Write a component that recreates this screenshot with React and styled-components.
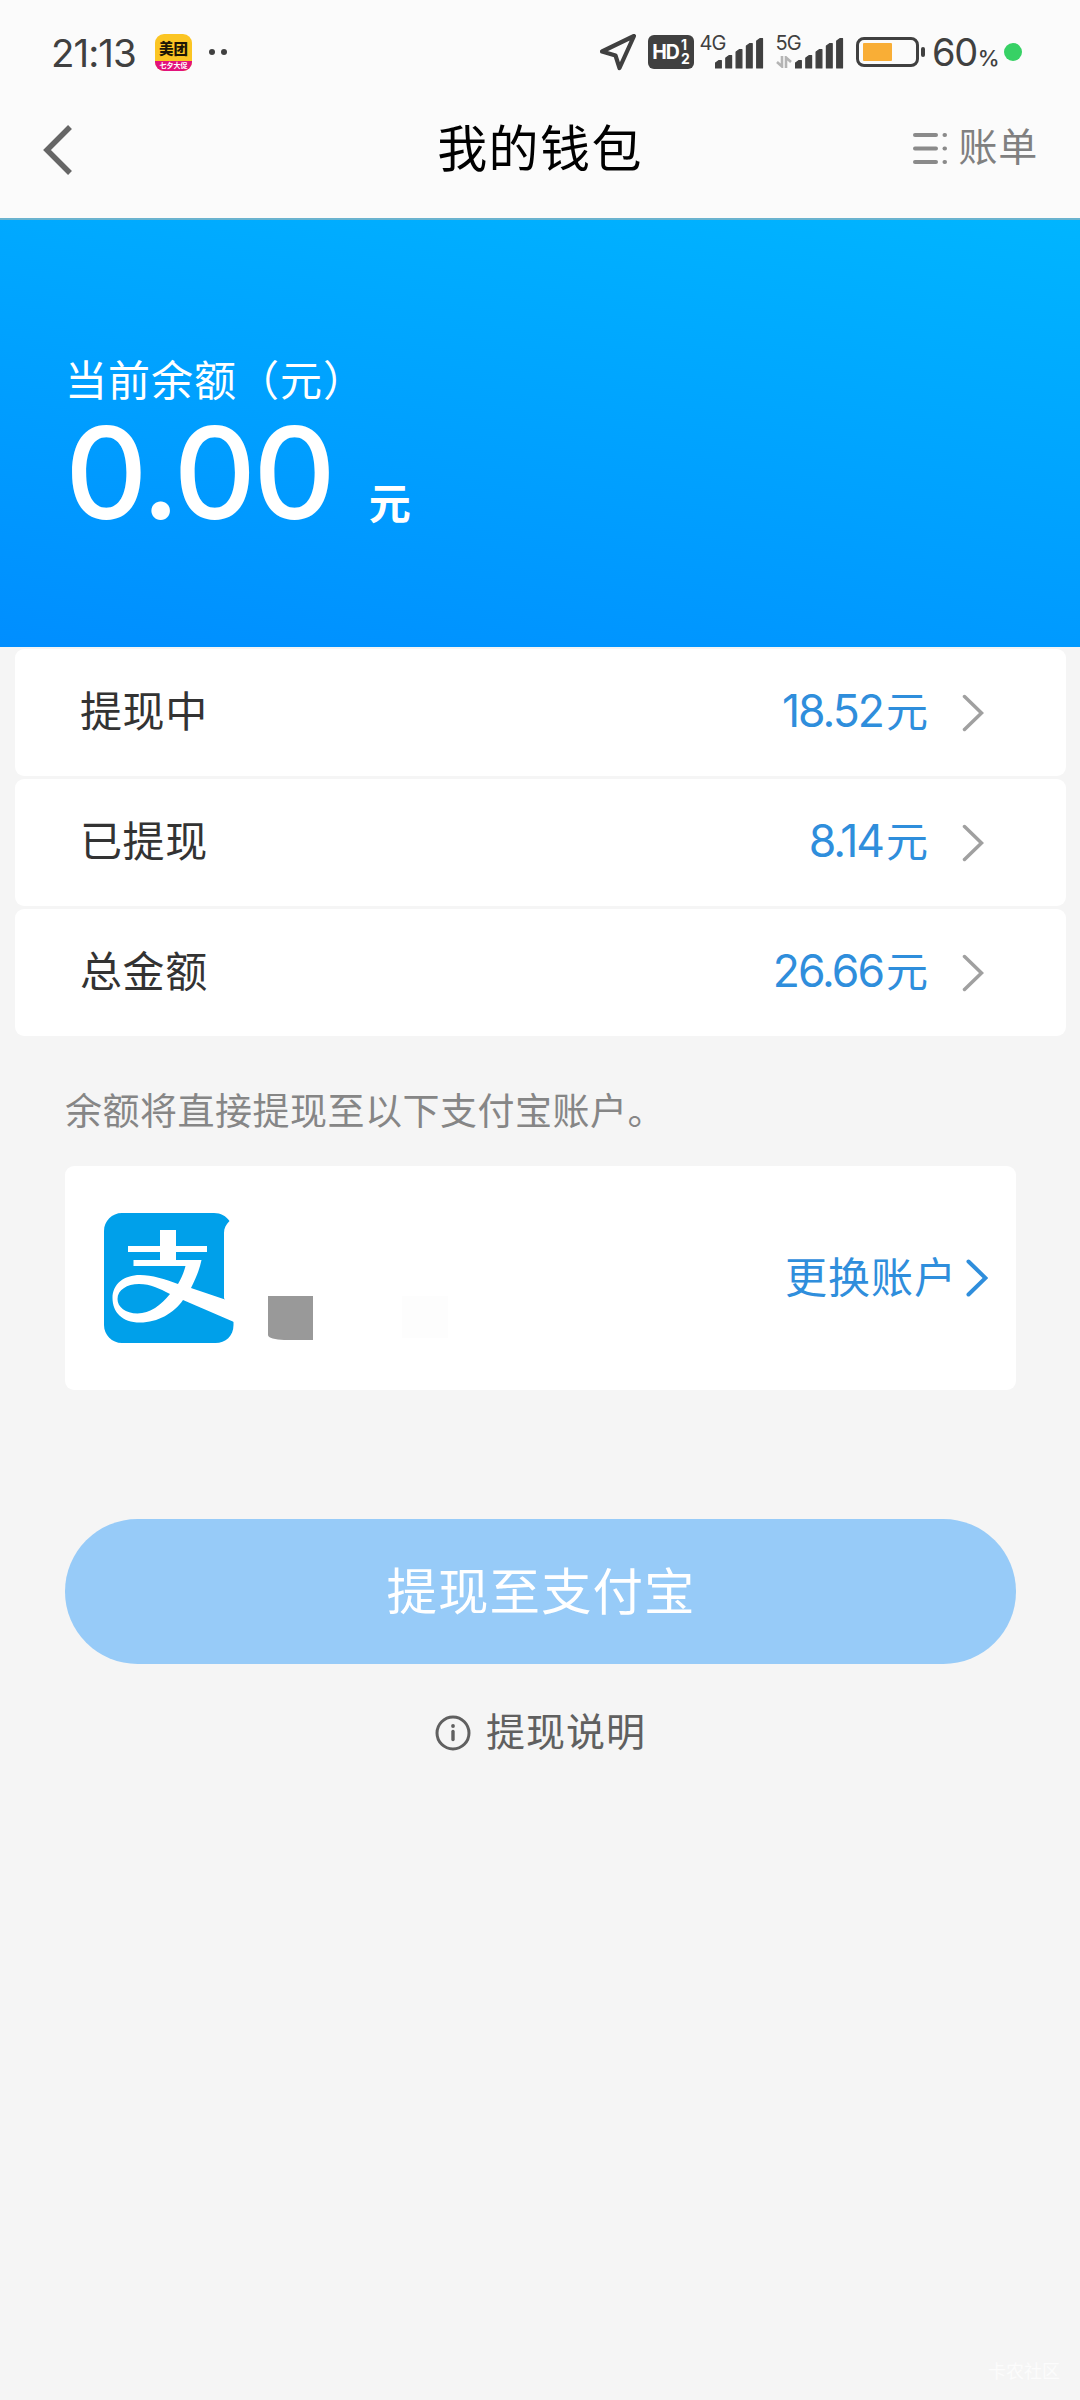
import styled, { createGlobalStyle } from 'styled-components';

const CJK = `'Noto Sans CJK SC', sans-serif`;
const LATIN = `Inter, 'Noto Sans CJK SC', sans-serif`;

const GlobalStyle = createGlobalStyle`
  * {
    box-sizing: border-box;
  }

  body {
    margin: 0;
    background: #f5f5f5;
    font-family: ${CJK};
  }
`;

const Page = styled.div`
  width: 1080px;
  height: 2400px;
  display: flex;
  flex-direction: column;
  background: #f5f5f5;
  overflow: hidden;
`;

const StatusBar = styled.header`
  display: flex;
  align-items: center;
  justify-content: space-between;
  height: 104px;
  padding: 0 58px 0 51px;
  background: #fbfbfb;
  color: #404040;
`;

const StatusGroup = styled.div`
  display: flex;
  align-items: center;
`;

const Clock = styled.span`
  width: 104px;
  padding-top: 1px;
  font-family: ${LATIN};
  font-size: 38.5px;
  line-height: 40px;
  letter-spacing: -1px;
  white-space: nowrap;
`;

const AppBadge = styled.div`
  display: flex;
  flex-direction: column;
  width: 37px;
  height: 37px;
  border-radius: 9px;
  background: #fbc523;
  overflow: hidden;
`;

const AppName = styled.span`
  height: 27px;
  padding-top: 5px;
  font-size: 14.5px;
  font-weight: 900;
  line-height: 17px;
  text-align: center;
  color: #1d1606;
`;

const AppPromo = styled.span`
  height: 10px;
  background: #e2127c;
  font-size: 7px;
  font-weight: 700;
  line-height: 8px;
  text-align: center;
  color: #fff;
`;

const Dots = styled.span`
  display: flex;
  gap: 6px;
  margin-left: 17px;
`;

const Dot = styled.i`
  width: ${({ $size }) => $size}px;
  height: ${({ $size }) => $size}px;
  border-radius: 50%;
  background: ${({ $color }) => $color};
`;

const HdBadge = styled.div`
  display: flex;
  align-items: center;
  justify-content: center;
  gap: 2px;
  width: 46px;
  height: 34px;
  margin: 0 6px 0 11px;
  border-radius: 6px;
  background: #404040;
  color: #fff;
  font-family: ${LATIN};
  font-size: 19.5px;
  font-weight: 700;
  letter-spacing: -1px;
`;

const HdSims = styled.span`
  display: flex;
  flex-direction: column;
  font-size: 14px;
  line-height: 14px;
`;

const Network = styled.div`
  display: flex;
  width: ${({ $width }) => $width}px;
  height: 34px;
`;

const NetworkType = styled.div`
  display: flex;
  flex-direction: column;
  gap: 4px;
  width: ${({ $width }) => $width}px;
  font-family: ${LATIN};
  font-size: 20px;
  line-height: 17px;
  letter-spacing: -0.8px;
  white-space: nowrap;
`;

const Percent = styled.div`
  display: flex;
  align-items: baseline;
  width: 72px;
  margin-left: 6.5px;
  padding-top: 5px;
  font-family: ${LATIN};
  font-size: 38px;
  line-height: 40px;
  letter-spacing: -1.4px;

  small {
    margin-left: 1px;
    font-size: 22px;
    font-weight: 500;
  }
`;

const NavBar = styled.nav`
  display: grid;
  grid-template-columns: 1fr auto 1fr;
  height: 116px;
  padding: 0 42px 0 42px;
  background: #fbfbfb;
  border-bottom: 2px solid #69b3cf;
`;

const BackButton = styled.button`
  display: flex;
  align-items: flex-start;
  padding: 20px 0 0;
  border: 0;
  background: none;
`;

const Title = styled.h1`
  margin: 11px 0 0;
  font-size: 50px;
  font-weight: 400;
  line-height: 60px;
  letter-spacing: 1.4px;
  color: #000;
`;

const BillLink = styled.a`
  display: flex;
  justify-content: flex-end;
  padding-top: 16px;
  gap: 11px;
  font-size: 39px;
  line-height: 48px;
  letter-spacing: 0.8px;
  color: #808080;

  svg {
    margin-top: 12px;
  }
`;

const Balance = styled.section`
  height: 427px;
  padding: 132px 65px 0;
  background: linear-gradient(190deg, #00b5ff 0%, #008eff 100%);
  color: #fff;
`;

const BalanceLabel = styled.p`
  margin: 0;
  font-size: 42px;
  line-height: 52px;
  letter-spacing: 1px;
`;

const BalanceAmount = styled.div`
  display: flex;
  align-items: baseline;
  margin-top: 4px;
  font-family: ${LATIN};
  font-size: 128px;
  font-weight: 500;
  line-height: 130px;
  letter-spacing: -3px;

  small {
    margin-left: 36px;
    font-family: ${CJK};
    font-size: 42px;
    font-weight: 600;
    line-height: 52px;
  }
`;

const Summary = styled.section`
  display: flex;
  flex-direction: column;
  gap: 3px;
  padding: 2px 14px 0 15px;
`;

const SummaryRow = styled.div`
  display: flex;
  align-items: center;
  height: 127px;
  padding: 0 82px 0 65px;
  border-radius: 9px;
  background: #fff;
`;

const SummaryLabel = styled.span`
  flex: 1;
  padding-bottom: 8px;
  font-size: 42px;
  letter-spacing: 0.6px;
  line-height: 60px;
  color: #333;
`;

const SummaryValue = styled.span`
  display: flex;
  align-items: baseline;
  margin-right: 34px;
  padding-bottom: 5px;
  font-family: ${LATIN};
  font-size: 44.5px;
  line-height: 60px;
  letter-spacing: -2px;
  color: #2f8edc;

  small {
    margin-left: 3px;
    font-family: ${CJK};
    font-size: 42px;
    letter-spacing: 0;
  }
`;

const Hint = styled.p`
  margin: 0;
  padding: 45px 65px 0;
  font-size: 37px;
  line-height: 56px;
  letter-spacing: 0.5px;
  color: #868686;
`;

const AccountCard = styled.section`
  display: flex;
  align-items: center;
  height: 224px;
  margin: 29px 64px 0 65px;
  padding: 0 28px 0 39px;
  border-radius: 9px;
  background: #fff;
`;

const MaskedName = styled.div`
  flex: 1;
  display: flex;
  align-items: flex-start;
  gap: 89px;
  margin: 80px 0 0 34px;
`;

const MaskBlock = styled.span`
  width: ${({ $width }) => $width}px;
  height: ${({ $height }) => $height}px;
  border-radius: ${({ $radius }) => $radius || 0};
  background: ${({ $color }) => $color};
`;

const SwitchAccount = styled.a`
  display: flex;
  align-items: center;
  gap: 9px;
  font-size: 42px;
  line-height: 52px;
  letter-spacing: 1px;
  color: #2f8edc;

  span {
    margin-top: -7px;
  }

  svg {
    margin-top: -1px;
  }
`;

const WithdrawButton = styled.button`
  height: 145px;
  margin: 129px 64px 0 65px;
  padding: 0 0 8px;
  border: 0;
  border-radius: 73px;
  background: #97cbf8;
  font-family: ${CJK};
  font-size: 50.5px;
  line-height: 60px;
  letter-spacing: 1px;
  text-indent: 1px;
  color: #fff;
`;

const Explain = styled.a`
  display: flex;
  align-items: center;
  justify-content: center;
  gap: 15px;
  margin-top: 39px;
  padding-left: 1px;
  font-size: 39px;
  line-height: 52px;
  letter-spacing: 1px;
  color: #606060;

  svg {
    margin-top: 7px;
  }
`;

const Watermark = styled.footer`
  margin-top: auto;
  padding: 0 20px 17px 0;
  font-size: 18px;
  line-height: 26px;
  text-align: right;
  color: #fcfcfc;
`;

const summary = [
  { label: '提现中', value: '18.52' },
  { label: '已提现', value: '8.14' },
  { label: '总金额', value: '26.66' },
];

function LocationIcon() {
  return (
    <svg width="38" height="38" viewBox="0 0 38 38">
      <path
        d="M35 3 3 18.500l13.500 4L20.500 35Z"
        fill="none"
        stroke="#404040"
        strokeWidth="4.200"
        strokeLinejoin="round"
      />
    </svg>
  );
}

function SignalBars() {
  const heights = [8, 13, 19, 25, 30];
  return (
    <svg width="49" height="34" viewBox="0 0 49 34">
      {heights.map((h, i) => (
        <path
          key={h}
          d={`M${0.5 + i * 10.3} ${33 - h + 3}l3.500-2.500h2.300v${h - 0.5}h-5.800Z`}
          fill="#404040"
          stroke="#404040"
          strokeWidth="1.200"
          strokeLinejoin="round"
        />
      ))}
    </svg>
  );
}

function DataArrows() {
  return (
    <svg width="16" height="12" viewBox="0 0 16 12">
      <path d="M6 0v10.500L1 6M10 12V1.500L15 6" fill="none" stroke="#b4b4b4" strokeWidth="2.600" />
    </svg>
  );
}

function BatteryIcon() {
  return (
    <svg width="70" height="30" viewBox="0 0 70 30">
      <rect x="1.500" y="1.500" width="60" height="27" rx="6.500" fill="none" stroke="#404040" strokeWidth="3" />
      <rect x="7" y="6" width="29" height="18" rx="1" fill="#f9ae36" />
      <rect x="65" y="10" width="4" height="10" rx="2" fill="#404040" />
    </svg>
  );
}

function BackIcon() {
  return (
    <svg width="32" height="52" viewBox="0 0 32 52">
      <path d="M28 3 5 26l23 23" fill="none" stroke="#666" strokeWidth="5.500" />
    </svg>
  );
}

function BillIcon() {
  return (
    <svg width="34" height="34" viewBox="0 0 34 34">
      {[3, 16.5, 30].map((y) => (
        <g key={y} stroke="#8a8a8a" strokeWidth="4" strokeLinecap="round">
          <path d={`M2 ${y}h21`} />
          <path d={`M31.500 ${y}h.5`} />
        </g>
      ))}
    </svg>
  );
}

function Chevron({ color, width }) {
  return (
    <svg width="22" height="38" viewBox="0 0 22 38">
      <path
        d="M2.500 2.500 19.500 19l-17 16.500"
        fill="none"
        stroke={color}
        strokeWidth={width}
        strokeLinecap="round"
      />
    </svg>
  );
}

function AlipayLogo() {
  return (
    <svg width="130" height="130" viewBox="0 0 130 130">
      <path
        d="M18 0h92c7 0 12 3 15.500 8-3.500 3.500-5.500 7-5.500 12v65l9.500 22v5c0 11-8 18-18 18H18C8 130 0 122 0 112V18C0 8 8 0 18 0Z"
        fill="#00a0ea"
      />
      <path
        d="M56 17h16v16h31v6H72v8h25.500c-2 10-6 19-10.500 28l34 11.500 9 1v21.500L79 87C70 100 54 109.500 36 109.500 18 109.500 8.500 99 8.500 85 8.500 71 20 62 36 62c12 0 25 4 38 9 3.500-6 6-12 7.500-18h-52v-6H56v-8H24v-6h32ZM66 81C55 75.500 47 71 35 71c-12 0-21.500 6-21.500 15 0 8 8 14.500 20 14.500C46 100.500 57 92 66 81Z"
        fill="#fff"
        fillRule="evenodd"
      />
    </svg>
  );
}

function InfoIcon() {
  return (
    <svg width="36" height="36" viewBox="0 0 36 36">
      <circle cx="18" cy="18" r="16" fill="none" stroke="#606060" strokeWidth="3" />
      <circle cx="18" cy="11" r="1.900" fill="#606060" />
      <path d="M18 16.500v8" stroke="#606060" strokeWidth="3.400" strokeLinecap="round" />
    </svg>
  );
}

export default function App() {
  return (
    <Page>
      <GlobalStyle />
      <StatusBar>
        <StatusGroup>
          <Clock>21:13</Clock>
          <AppBadge>
            <AppName>美团</AppName>
            <AppPromo>七夕大促</AppPromo>
          </AppBadge>
          <Dots>
            <Dot $size={6} $color="#404040" />
            <Dot $size={6} $color="#404040" />
          </Dots>
        </StatusGroup>
        <StatusGroup>
          <LocationIcon />
          <HdBadge>
            HD
            <HdSims>
              <span>1</span>
              <span>2</span>
            </HdSims>
          </HdBadge>
          <Network $width={76}>
            <NetworkType $width={15}>4G</NetworkType>
            <SignalBars />
          </Network>
          <Network $width={80}>
            <NetworkType $width={19}>
              5G
              <DataArrows />
            </NetworkType>
            <SignalBars />
          </Network>
          <BatteryIcon />
          <Percent>
            60<small>%</small>
          </Percent>
          <Dot $size={18} $color="#37d165" />
        </StatusGroup>
      </StatusBar>

      <NavBar>
        <BackButton aria-label="返回">
          <BackIcon />
        </BackButton>
        <Title>我的钱包</Title>
        <BillLink>
          <BillIcon />
          账单
        </BillLink>
      </NavBar>

      <Balance>
        <BalanceLabel>当前余额（元）</BalanceLabel>
        <BalanceAmount>
          0.00<small>元</small>
        </BalanceAmount>
      </Balance>

      <Summary>
        {summary.map((item) => (
          <SummaryRow key={item.label}>
            <SummaryLabel>{item.label}</SummaryLabel>
            <SummaryValue>
              {item.value}
              <small>元</small>
            </SummaryValue>
            <Chevron color="#a0a0a0" width={3.5} />
          </SummaryRow>
        ))}
      </Summary>

      <Hint>余额将直接提现至以下支付宝账户。</Hint>

      <AccountCard>
        <AlipayLogo />
        <MaskedName>
          <MaskBlock $width={45} $height={44} $color="#999" $radius="0 0 0 16px / 0 0 0 5px" />
          <MaskBlock $width={46} $height={42} $color="#fdfdfd" />
        </MaskedName>
        <SwitchAccount>
          <span>更换账户</span>
          <Chevron color="#2f8edc" width={4} />
        </SwitchAccount>
      </AccountCard>

      <WithdrawButton>提现至支付宝</WithdrawButton>

      <Explain>
        <InfoIcon />
        提现说明
      </Explain>

      <Watermark>卡农社区</Watermark>
    </Page>
  );
}
